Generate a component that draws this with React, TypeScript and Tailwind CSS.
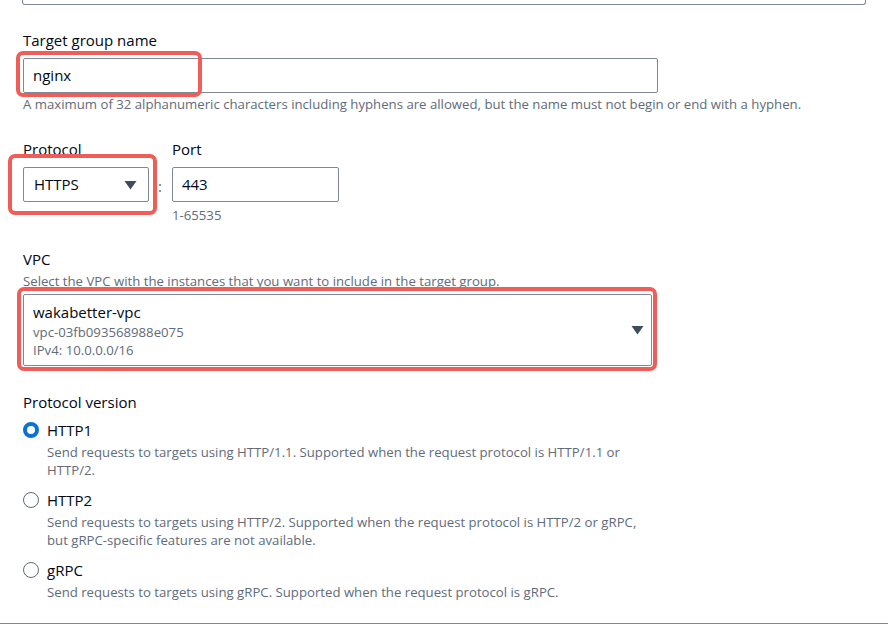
const font = { fontFamily: '"Open Sans", "Noto Sans", sans-serif' }

const versions = [
  {
    id: 'HTTP1',
    checked: true,
    lines: [
      'Send requests to targets using HTTP/1.1. Supported when the request protocol is HTTP/1.1 or',
      'HTTP/2.',
    ],
  },
  {
    id: 'HTTP2',
    checked: false,
    lines: [
      'Send requests to targets using HTTP/2. Supported when the request protocol is HTTP/2 or gRPC,',
      'but gRPC-specific features are not available.',
    ],
  },
  {
    id: 'gRPC',
    checked: false,
    lines: ['Send requests to targets using gRPC. Supported when the request protocol is gRPC.'],
  },
]

function Caret() {
  return (
    <svg width="13" height="10" viewBox="0 0 13 10" aria-hidden="true">
      <path d="M0.5 1h12L6.5 9.5z" fill="#414d5c" />
    </svg>
  )
}

function Radio({ checked }: { checked: boolean }) {
  if (checked) {
    return (
      <span className="box-border h-4 w-4 shrink-0 rounded-full border-[4.5px] border-[#0972d3] bg-white" />
    )
  }
  return <span className="box-border h-4 w-4 shrink-0 rounded-full border border-[#5f6b7a] bg-white" />
}

export default function App() {
  return (
    <div
      className="relative h-[625px] w-[888px] overflow-hidden bg-white text-[#000716]"
      style={font}
    >
      <div className="mx-[22px] h-[5px] rounded-b-[3px] border-x border-b border-[#7d8998]" />

      <div className="flex flex-col px-[23px]">
        {/* Target group name */}
        <div className="mt-[24px] text-[15px] leading-[22px]">Target group name</div>
        <div className="relative mt-[7px]">
          <div className="box-border flex h-[35px] w-[635px] items-center rounded-[2px] border border-[#7d8998] px-[9px] text-[15px]">
            nginx
          </div>
          <div className="pointer-events-none absolute left-[-7px] top-[-7px] h-[46px] w-[186px] rounded-[7px] border-[4px] border-[#f05c57]" />
        </div>
        <div className="mt-[2px] text-[13.2px] leading-[18px] text-[#5f6b7a]">
          A maximum of 32 alphanumeric characters including hyphens are allowed, but the name must not begin or end with a hyphen.
        </div>

        {/* Protocol / Port */}
        <div className="mt-[25px] flex items-start">
          <div className="flex flex-col">
            <div className="text-[15px] leading-[22px]">Protocol</div>
            <div className="relative mt-[7px]">
              <div className="box-border flex h-[35px] w-[126px] items-center justify-between rounded-[2px] border border-[#7d8998] pl-[10px] pr-[11px] text-[15px]">
                <span>HTTPS</span>
                <Caret />
              </div>
              <div className="pointer-events-none absolute left-[-15px] top-[-13px] h-[61px] w-[149px] rounded-[7px] border-[4px] border-[#f05c57]" />
            </div>
          </div>
          <div className="ml-[9px] mr-[10px] mt-[38px] text-[15px] leading-[20px] text-[#5f6b7a]">:</div>
          <div className="flex flex-col">
            <div className="text-[15px] leading-[22px]">Port</div>
            <div className="mt-[7px] box-border flex h-[35px] w-[167px] items-center rounded-[2px] border border-[#7d8998] px-[9px] text-[15px]">
              443
            </div>
            <div className="mt-[4px] text-[13.2px] leading-[18px] text-[#5f6b7a]">1-65535</div>
          </div>
        </div>

        {/* VPC */}
        <div className="mt-[24px] text-[15px] leading-[22px]">VPC</div>
        <div className="mt-[2px] text-[13.2px] leading-[18px] text-[#5f6b7a]">
          Select the VPC with the instances that you want to include in the target group.
        </div>
        <div className="relative mt-[4px]">
          <div className="box-border flex h-[72px] w-[629px] items-center justify-between rounded-[2px] border border-[#7d8998] pl-[9px] pr-[7px]">
            <div className="flex flex-col">
              <span className="text-[15px] leading-[22px]">wakabetter-vpc</span>
              <span className="text-[13.2px] leading-[18px] text-[#5f6b7a]">vpc-03fb093568988e075</span>
              <span className="text-[13.2px] leading-[18px] text-[#5f6b7a]">IPv4: 10.0.0.0/16</span>
            </div>
            <Caret />
          </div>
          <div className="pointer-events-none absolute left-[-6px] top-[-7px] h-[84px] w-[640px] rounded-[7px] border-[4px] border-[#f05c57]" />
        </div>

        {/* Protocol version */}
        <div className="mt-[25px] text-[15px] leading-[22px]">Protocol version</div>
        <div className="mt-[6px] flex flex-col gap-[10px]">
          {versions.map((v) => (
            <div key={v.id} className="flex flex-col">
              <div className="flex items-center gap-[8px] text-[15px] leading-[22px]">
                <Radio checked={v.checked} />
                <span>{v.id}</span>
              </div>
              <div className="mt-[2px] pl-[24px] text-[13.2px] leading-[18px] text-[#5f6b7a]">
                {v.lines.map((l) => (
                  <div key={l}>{l}</div>
                ))}
              </div>
            </div>
          ))}
        </div>
      </div>

      <div className="absolute bottom-[1px] left-0 h-px w-full bg-[#7d8998]" />
    </div>
  )
}
